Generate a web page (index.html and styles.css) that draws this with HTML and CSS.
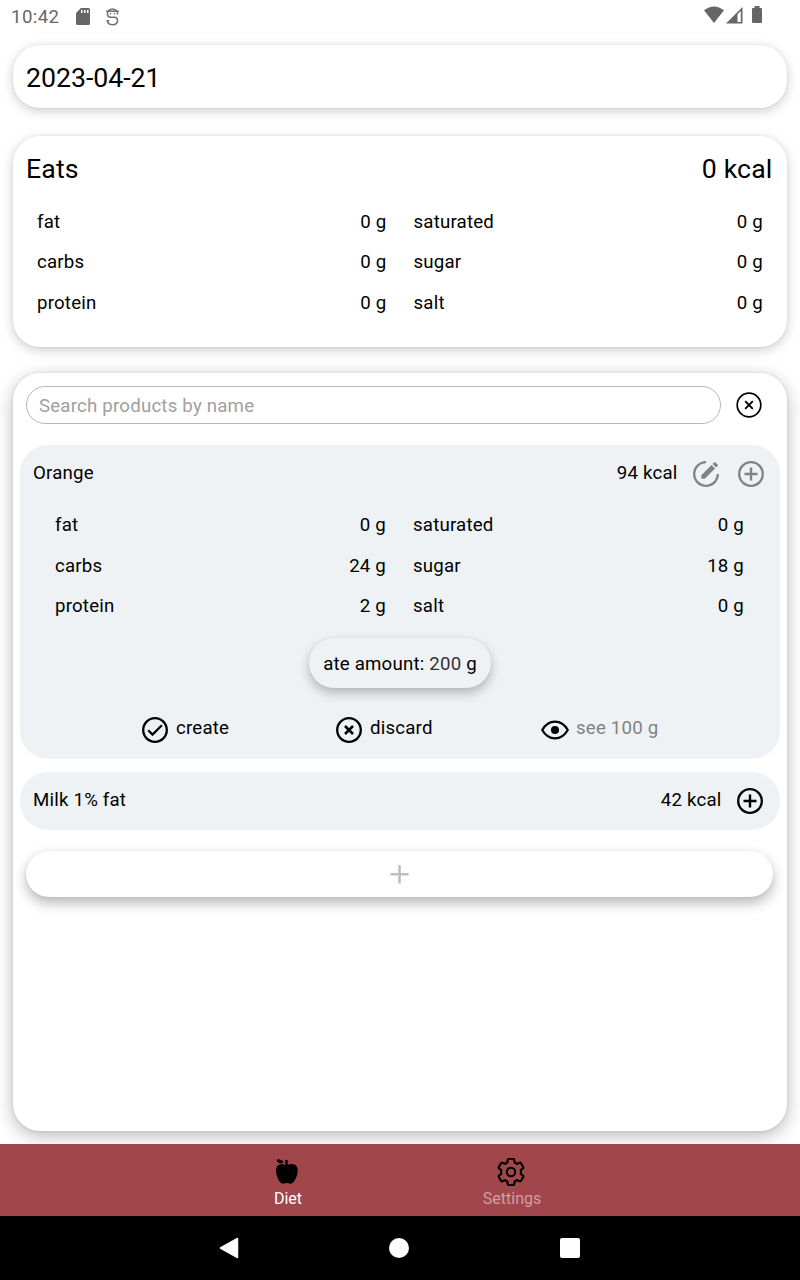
FILE: index.html
```html
<!DOCTYPE html>
<html lang="en">
<head>
<meta charset="utf-8">
<title>Diet</title>
<link rel="stylesheet" href="styles.css">
</head>
<body>
<svg class="defs" width="0" height="0">
  <symbol id="plus-circle" viewBox="0 0 28 28"><circle cx="14" cy="14" r="11.800" fill="none" stroke="currentColor" stroke-width="2.300"/><path d="M14 7.500v13M7.500 14h13" fill="none" stroke="currentColor" stroke-width="2.400"/></symbol>
  <symbol id="x-circle" viewBox="0 0 28 28"><circle cx="14" cy="14" r="11.800" fill="none" stroke="currentColor" stroke-width="2.300"/><path d="M10 10l8 8M18 10l-8 8" fill="none" stroke="currentColor" stroke-width="2.500"/></symbol>
</svg>
<header class="status">
  <span class="clock">10:42</span>
  <svg class="sd" width="14" height="17" viewBox="0 0 14 17"><path fill="#666" fill-rule="evenodd" d="M5 0h7.500Q14 0 14 1.500v14q0 1.500-1.500 1.500h-11Q0 17 0 15.500V5zM5 2v3h1.500V2zM8 2v3h1.500V2zM11 2v3h1.500V2z"/></svg>
  <svg class="badge-s" width="13" height="18" viewBox="0 0 13 18" fill="none" stroke="#707070" stroke-width="1.500"><path d="M.2 3.300h12.600M2 3.200Q3.500 1 6.500 1T11 3.200M1.500 3.500v2.500q0 3.200 3.300 3.200h3.400q3.300 0 3.300 3.300 0 4.200-5 4.200T1.500 12.800M.5 12.700h2.800M11.500 3.500v3M3.900 5.700h1.300M7.800 5.700h1.300"/></svg>
  <svg class="signals" width="60" height="19" viewBox="0 0 60 19"><path fill="#666" d="M0 4.300Q10-3.500 20 4.300L10 17z"/><path fill="#666" fill-rule="evenodd" d="M38.500 1v16.500H22zM36.800 5v11h-3.300V8.300z"/><path fill="#666" d="M50.500 0h5v2H57q1 0 1 1v13q0 1-1 1h-8q-1 0-1-1V3q0-1 1-1h1.500z"/></svg>
</header>
<main class="screen">
  <section class="card date">2023-04-21</section>
  <section class="card eats">
    <div class="title"><span>Eats</span><span>0 kcal</span></div>
    <div class="facts">
      <div class="fact"><span>fat</span><span>0 g</span></div><div class="fact"><span>saturated</span><span>0 g</span></div>
      <div class="fact"><span>carbs</span><span>0 g</span></div><div class="fact"><span>sugar</span><span>0 g</span></div>
      <div class="fact"><span>protein</span><span>0 g</span></div><div class="fact"><span>salt</span><span>0 g</span></div>
    </div>
  </section>
  <section class="card products">
    <div class="search">
      <div class="field">Search products by name</div>
      <svg class="clear" width="28" height="28" viewBox="0 0 28 28"><circle cx="14" cy="14" r="11.800" fill="none" stroke="#000" stroke-width="1.700"/><path d="M10.200 10.200l7.600 7.600M17.800 10.200l-7.600 7.600" stroke="#000" stroke-width="1.900"/></svg>
    </div>
    <article class="product open">
      <div class="head">
        <span class="name">Orange</span><span>94 kcal</span>
        <svg class="icon muted" viewBox="0 0 28 28"><path fill="none" stroke="currentColor" stroke-width="2.300" d="M14 2.200A11.800 11.800 0 1 0 25.800 14"/><path fill="currentColor" d="M9.300 15.200L19.500 5l3.500 3.500L12.800 18.700H9.300zM20.600 3.900l1.500-1.500q.7-.7 1.400 0l2.100 2.100q.7.700 0 1.400l-1.500 1.500z"/></svg>
        <svg class="icon muted"><use href="#plus-circle"/></svg>
      </div>
      <div class="facts">
        <div class="fact"><span>fat</span><span>0 g</span></div><div class="fact"><span>saturated</span><span>0 g</span></div>
        <div class="fact"><span>carbs</span><span>24 g</span></div><div class="fact"><span>sugar</span><span>18 g</span></div>
        <div class="fact"><span>protein</span><span>2 g</span></div><div class="fact"><span>salt</span><span>0 g</span></div>
      </div>
      <div class="amount">ate amount: <span class="value">200</span> g</div>
      <div class="actions">
        <div class="action create"><svg class="icon" viewBox="0 0 28 28"><circle cx="14" cy="14" r="11.800" fill="none" stroke="#000" stroke-width="2.300"/><path d="M7.200 14.300l4.300 4.300L20.900 9.200" fill="none" stroke="#000" stroke-width="2.300"/></svg><span>create</span></div>
        <div class="action discard"><svg class="icon"><use href="#x-circle"/></svg><span>discard</span></div>
        <div class="action see"><svg class="icon" viewBox="0 0 28 28"><path d="M1.200 14Q6 5.600 14 5.600T26.800 14Q22 22.400 14 22.400T1.200 14z" fill="none" stroke="#000" stroke-width="2.200" stroke-linejoin="round"/><circle cx="14" cy="14" r="4"/></svg><span>see 100 g</span></div>
      </div>
    </article>
    <article class="product">
      <div class="head"><span class="name">Milk 1% fat</span><span>42 kcal</span><svg class="icon"><use href="#plus-circle"/></svg></div>
    </article>
    <div class="add"><svg width="20" height="20" viewBox="0 0 20 20"><path d="M10.500 1v18.400M1.300 10.200h18.400" stroke="#bfbfbf" stroke-width="2.600"/></svg></div>
  </section>
</main>
<nav class="tabs">
  <div class="tab active"><svg width="28" height="28" viewBox="0 0 28 28"><path d="M12.300 7.200V2h2.400v4.700Q17.500 5.500 20.500 6.200 24.700 7.200 24.700 12.500q-.3 6.500-3.700 10.900-2 2.800-4.500 2.200-3-1.200-5.500 0-2.500.6-4.500-2.200Q3.300 19 3 12.500 3 7.200 7.200 6.200 10 5.500 12.300 7.200zM3.500 2Q4.500.8 7 1.400 9.500 1.800 10.800 4.300 9 5.700 6.800 5.200 4 4.800 3.500 2z"/></svg><span>Diet</span></div>
  <div class="tab"><svg width="28" height="28" viewBox="0 0 28 28" fill="none" stroke="#000" stroke-width="2.100" stroke-linejoin="round"><path d="M10.500 2.300Q10.600 1 12 1h4q1.400 0 1.500 1.300v2.200q1.500.6 2.600 1.500l2-1.100q1.300-.7 2 .5l2 3.500q.7 1.200-.5 1.900l-1.900 1.200q.4 1.900 0 4l1.900 1.200q1.200.7.500 1.900l-2 3.500q-.7 1.200-2 .5l-2-1.100q-1.100.9-2.600 1.500v2.200Q17.400 27 16 27h-4q-1.400 0-1.500-1.300v-2.200Q9 22.900 7.900 22l-2 1.100q-1.300.7-2-.5l-2-3.500q-.7-1.200.5-1.900L4.300 16q-.4-2.100 0-4l-1.900-1.200q-1.200-.7-.5-1.900l2-3.500q.7-1.200 2-.5l2 1.100q1.100-.9 2.600-1.500z"/><circle cx="14" cy="14" r="4.200"/></svg><span>Settings</span></div>
</nav>
<footer class="system">
  <svg width="20" height="22" viewBox="0 0 20 22"><path d="M1.500 11L18.500 1.500v19z" fill="#fff" stroke="#fff" stroke-width="1.500" stroke-linejoin="round"/></svg>
  <span class="home"></span><span class="recent"></span>
</footer>
</body>
</html>
```
FILE: styles.css
```css
* { box-sizing: border-box; }
body { margin: 0; width: 800px; height: 1280px; display: flex; flex-direction: column; overflow: hidden; background: #fff; color: #000; font-family: Roboto, sans-serif; font-size: 18.67px; letter-spacing: .2px; line-height: 24px; }
svg { display: block; flex: none; }
.defs { position: absolute; }
.status { height: 32px; display: flex; align-items: flex-start; padding: 7px 36px 0 11px; color: #666; }
.clock { width: 65px; font-size: 18.67px; line-height: 20px; letter-spacing: .4px; }
.sd { margin-top: 1px; }
.badge-s { margin: 1px 0 0 15.500px; }
.signals { margin: -1px 0 0 auto; }
.screen { height: 1112px; padding: 13px 13px; overflow: hidden; }
.card { background: #fff; border-radius: 27px; box-shadow: 0 3px 12px rgba(0,0,0,.2), 0 0 3px rgba(0,0,0,.07); }
.date { height: 63px; padding: 17px 13px; font-size: 26.67px; line-height: 32px; letter-spacing: 0; }
.eats { height: 211px; margin-top: 28px; padding: 17px 14.500px 0 13px; }
.title { display: flex; justify-content: space-between; font-size: 26.67px; line-height: 32px; letter-spacing: .15px; }
.facts { display: grid; grid-template-columns: 1fr 1fr; grid-auto-rows: 40.500px; column-gap: 27px; align-items: center; }
.fact { display: flex; justify-content: space-between; }
.eats .facts { margin: 16.700px 9.500px 0 11px; }
.products { height: 758px; margin-top: 26px; padding: 13px 7px 0; box-shadow: 0 5px 18px rgba(0,0,0,.27), 0 0 4px rgba(0,0,0,.09); }
.search { display: flex; align-items: center; padding: 0 17px 0 6px; justify-content: space-between; }
.field { width: 695px; height: 38px; border: 1px solid #b8b8b8; border-radius: 19px; padding: 7px 12px; color: #a0a0a0; }
.product { height: 58px; margin-top: 13px; padding: 15px 16px 0 13px; border-radius: 28px; background: #eef2f5; }
.product.open { height: 314px; margin-top: 21px; padding-right: 15px; }
.head { display: flex; align-items: center; height: 28px; }
.head > span { margin-top: -3px; }
.name { flex: 1; }
.icon { width: 28px; height: 28px; margin-left: 14.500px; color: #000; }
.muted { color: #828282; }
.muted + .muted { margin-left: 17px; }
.open .facts { margin: 17px 21px 0 22px; }
.amount { width: 182px; height: 50px; margin: 11px 0 0 276px; padding: 14px 0 12px; text-align: center; border-radius: 25px; background: #eef2f5; box-shadow: 0 5px 11px rgba(0,0,0,.25), 0 0 3px rgba(0,0,0,.05); white-space: nowrap; }
.value { color: #333; }
.actions { display: grid; grid-template-columns: 194px 206px 1fr; margin: 27.500px 0 0 108px; }
.action { display: flex; align-items: center; gap: 7px; line-height: 24px; }
.action .icon { margin: 1px 0 -1px; }
.action span { margin-top: -2px; }
.see { color: #828282; }
.add { height: 46px; margin: 21px 7.500px 0 6px; border-radius: 23px; display: grid; place-items: center; background: #fff; box-shadow: 0 6px 13px rgba(0,0,0,.29), 0 0 3px rgba(0,0,0,.05); }
.tabs { height: 72px; display: flex; justify-content: center; background: #a1474b; font-size: 16px; line-height: 20px; letter-spacing: 0; color: #cf9fa2; }
.tab { width: 224px; display: flex; flex-direction: column; align-items: center; padding-top: 14px; gap: 3px; }
.tab svg { margin-left: -2px; }
.active { color: #fff; }
.system { height: 64px; display: flex; align-items: center; background: #000; padding-left: 219px; }
.home { width: 20px; height: 20px; margin-left: 150.400px; border-radius: 50%; background: #fff; }
.recent { width: 20px; height: 20px; margin-left: 151px; border-radius: 2px; background: #fff; }
```
